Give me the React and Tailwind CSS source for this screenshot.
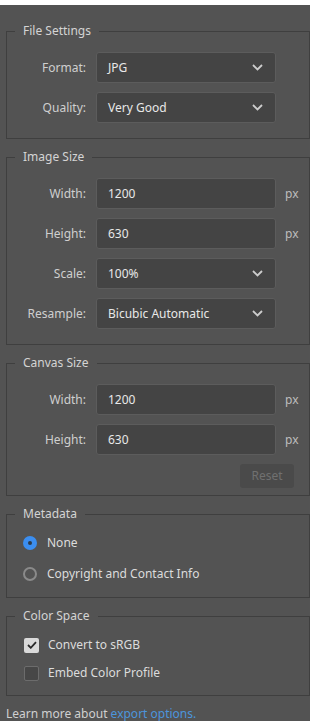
import { useState } from 'react';

const FONT = { fontFamily: '"Noto Sans", "Open Sans", sans-serif' };

function Chevron() {
  return (
    <svg width="11" height="7" viewBox="0 0 11 7" className="shrink-0">
      <path d="M1 1l4.5 4.5L10 1" fill="none" stroke="#cdcdcd" strokeWidth="1.8" />
    </svg>
  );
}

function Group({ title, children, className = '' }) {
  return (
    <fieldset className={`ml-[6px] border border-[#3f3f3f] ${className}`}>
      <legend className="ml-[8px] px-[8px] text-[12px] leading-[18px] text-[#d4d4d4]">{title}</legend>
      {children}
    </fieldset>
  );
}

function Field({ label, value, select, unit }) {
  return (
    <div className="flex items-center">
      <span className="w-[80px] pr-[1px] text-right text-[12px] text-[#cfcfcf]">{label}</span>
      <div className="ml-[9px] flex h-[31px] w-[180px] items-center justify-between rounded-[3px] border border-[#5c5c5c] bg-[#444444] pl-[11px] pr-[12px] text-[12px] text-[#e8e8e8]">
        <span>{value}</span>
        {select && <Chevron />}
      </div>
      {unit && <span className="ml-[9px] text-[12px] text-[#bdbdbd]">{unit}</span>}
    </div>
  );
}

export default function App() {
  const [meta, setMeta] = useState('none');
  const [srgb, setSrgb] = useState(true);
  const [embed, setEmbed] = useState(false);

  return (
    <div style={FONT} className="min-h-[721px] w-[310px] bg-white pt-[5px]">
      <div className="min-h-[716px] bg-[#535353] pt-[17px]">
        <Group title="File Settings">
          <div className="flex flex-col gap-[9px] pb-[15px] pt-[12px]">
            <Field label="Format:" value="JPG" select />
            <Field label="Quality:" value="Very Good" select />
          </div>
        </Group>

        <Group title="Image Size" className="mt-[9px]">
          <div className="flex flex-col gap-[9px] pb-[15px] pt-[12px]">
            <Field label="Width:" value="1200" unit="px" />
            <Field label="Height:" value="630" unit="px" />
            <Field label="Scale:" value="100%" select />
            <Field label="Resample:" value="Bicubic Automatic" select />
          </div>
        </Group>

        <Group title="Canvas Size" className="mt-[9px]">
          <div className="flex flex-col gap-[9px] pt-[12px]">
            <Field label="Width:" value="1200" unit="px" />
            <Field label="Height:" value="630" unit="px" />
          </div>
          <div className="flex justify-end pb-[7px] pr-[15px] pt-[9px]">
            <button className="h-[24px] w-[54px] rounded-[3px] bg-[#4a4a4a] text-[12px] text-[#707070]">Reset</button>
          </div>
        </Group>

        <Group title="Metadata" className="mt-[9px]">
          <div className="flex flex-col gap-[11px] pb-[13px] pl-[16px] pt-[10px]">
            {[
              ['none', 'None'],
              ['copy', 'Copyright and Contact Info'],
            ].map(([k, label]) => (
              <button key={k} onClick={() => setMeta(k)} className="flex h-[20px] items-center gap-[10px] text-left">
                {meta === k ? (
                  <span className="flex h-[14px] w-[14px] items-center justify-center rounded-full bg-[#3b8ef0]">
                    <span className="h-[4px] w-[4px] rounded-full bg-[#2c3a4c]" />
                  </span>
                ) : (
                  <span className="h-[14px] w-[14px] rounded-full border-2 border-[#8a8a8a]" />
                )}
                <span className="text-[12px] text-[#dcdcdc]">{label}</span>
              </button>
            ))}
          </div>
        </Group>

        <Group title="Color Space" className="mt-[9px]">
          <div className="flex flex-col gap-[8px] pb-[12px] pl-[17px] pt-[10px]">
            {[
              ['Convert to sRGB', srgb, setSrgb],
              ['Embed Color Profile', embed, setEmbed],
            ].map(([label, on, set]) => (
              <button key={label} onClick={() => set(!on)} className="flex h-[20px] items-center gap-[9px] text-left">
                {on ? (
                  <span className="flex h-[15px] w-[15px] items-center justify-center rounded-[2px] bg-[#dadada]">
                    <svg width="10" height="8" viewBox="0 0 10 8">
                      <path d="M1 4l2.8 2.8L9 1.2" fill="none" stroke="#2a2a2a" strokeWidth="1.8" />
                    </svg>
                  </span>
                ) : (
                  <span className="h-[15px] w-[15px] rounded-[2px] border border-[#6c6c6c] bg-[#474747]" />
                )}
                <span className="text-[12px] text-[#dcdcdc]">{label}</span>
              </button>
            ))}
          </div>
        </Group>

        <p className="px-[6px] pt-[9px] text-[12px] leading-[18px] text-[#d0d0d0]">
          Learn more about <span className="text-[#4c95dc]">export options.</span>
        </p>
      </div>
    </div>
  );
}
